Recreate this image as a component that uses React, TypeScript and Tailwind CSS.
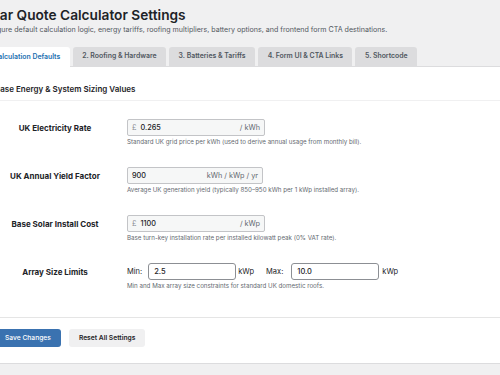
import React from "react";

// Settings screen for the solar quote calculator (WP admin look, scaled down).

const TABS = [
  "1. Calculation Defaults",
  "2. Roofing & Hardware",
  "3. Batteries & Tariffs",
  "4. Form UI & CTA Links",
  "5. Shortcode",
];

function Row({ label, help, children }: { label: string; help: string; children: React.ReactNode }) {
  return (
    <div className="flex">
      <div className="w-[120px] h-[17px] flex items-center justify-center text-[8px] font-bold text-[#1d2327]">{label}</div>
      <div className="ml-[12px]">
        {children}
        <p className="mt-[1px] text-[6.2px] leading-[10px] text-[#646970]">{help}</p>
      </div>
    </div>
  );
}

function Affix({ pre, value, suf, w }: { pre?: string; value: string; suf: string; w: string }) {
  return (
    <div className={`${w} h-[17px] flex items-center bg-[#f6f7f7] border border-[#c3c4c7] rounded-[2px] px-[4px] text-[7.3px] leading-none`}>
      {pre && <span className="text-[#8c8f94] mr-[4px]">{pre}</span>}
      <span className="flex-1 text-[#1d2327] font-medium">{value}</span>
      <span className="text-[#646970]">{suf}</span>
    </div>
  );
}

export default function App() {
  return (
    <div className="w-[500px] h-[375px] overflow-hidden bg-[#f0f0f1] font-['Inter',sans-serif]">
      <div className="ml-[-21px] w-[560px]">
        <h1 className="pt-[5px] text-[13.7px] leading-[20px] font-semibold text-[#1d2327]">Solar Quote Calculator Settings</h1>
        <p className="text-[7.1px] leading-[10px] text-[#50575e]">
          Configure default calculation logic, energy tariffs, roofing multipliers, battery options, and frontend form CTA destinations.
        </p>

        <div className="mt-[12px] flex gap-[3px] border-b border-[#dcdcde]">
          {TABS.map((t, i) => (
            <div
              key={t}
              className={
                i === 0
                  ? "h-[20px] mb-[-1px] ml-[-2px] px-[9.5px] flex items-center rounded-t-[3px] bg-white text-[6.9px] font-semibold text-[#2271b1]"
                  : "h-[19px] px-[9.5px] flex items-center rounded-t-[3px] bg-[#dcdcde] text-[6.9px] font-semibold text-[#50575e]"
              }
            >
              {t}
            </div>
          ))}
        </div>

        <div className="bg-white border-b border-[#dcdcde]">
          <div className="px-[16px] pt-[16px] pb-[5px]">
            <h2 className="text-[8px] leading-[12px] font-semibold text-[#1d2327]">Base Energy &amp; System Sizing Values</h2>
          </div>
          <div className="border-t border-[#f0f0f1]" />

          <div className="px-[16px] pt-[18px] pb-[26px] flex flex-col gap-[20px]">
            <Row label="UK Electricity Rate" help="Standard UK grid price per kWh (used to derive annual usage from monthly bill).">
              <Affix w="w-[138px]" pre="£" value="0.265" suf="/ kWh" />
            </Row>
            <Row label="UK Annual Yield Factor" help="Average UK generation yield (typically 850–950 kWh per 1 kWp installed array).">
              <Affix w="w-[136px]" value="900" suf="kWh / kWp / yr" />
            </Row>
            <Row label="Base Solar Install Cost" help="Base turn-key installation rate per installed kilowatt peak (0% VAT rate).">
              <Affix w="w-[138px]" pre="£" value="1100" suf="/ kWp" />
            </Row>
            <Row label="Array Size Limits" help="Min and Max array size constraints for standard UK domestic roofs.">
              <div className="h-[17px] flex items-center text-[7.5px] text-[#1d2327]">
                <span>Min:</span>
                <div className="ml-[6px] w-[88px] h-[17px] flex items-center px-[5px] border border-[#8c8f94] rounded-[3px] bg-white font-medium">2.5</div>
                <span className="ml-[2px]">kWp</span>
                <span className="ml-[12px]">Max:</span>
                <div className="ml-[8px] w-[88px] h-[17px] flex items-center px-[5px] border border-[#8c8f94] rounded-[3px] bg-white font-medium">10.0</div>
                <span className="ml-[3px]">kWp</span>
              </div>
            </Row>
          </div>

          <div className="border-t-[1.5px] border-[#e5e5e5]" />
          <div className="px-[16px] pt-[11px] pb-[16px] flex gap-[8px]">
            <button className="h-[18px] px-[10px] rounded-[3px] bg-[#3a72b0] text-white text-[6.7px] font-medium">Save Changes</button>
            <button className="h-[18px] px-[10px] rounded-[3px] bg-[#f0f0f1] text-[#1d2327] text-[6.7px] font-semibold">Reset All Settings</button>
          </div>
        </div>
      </div>
    </div>
  );
}
